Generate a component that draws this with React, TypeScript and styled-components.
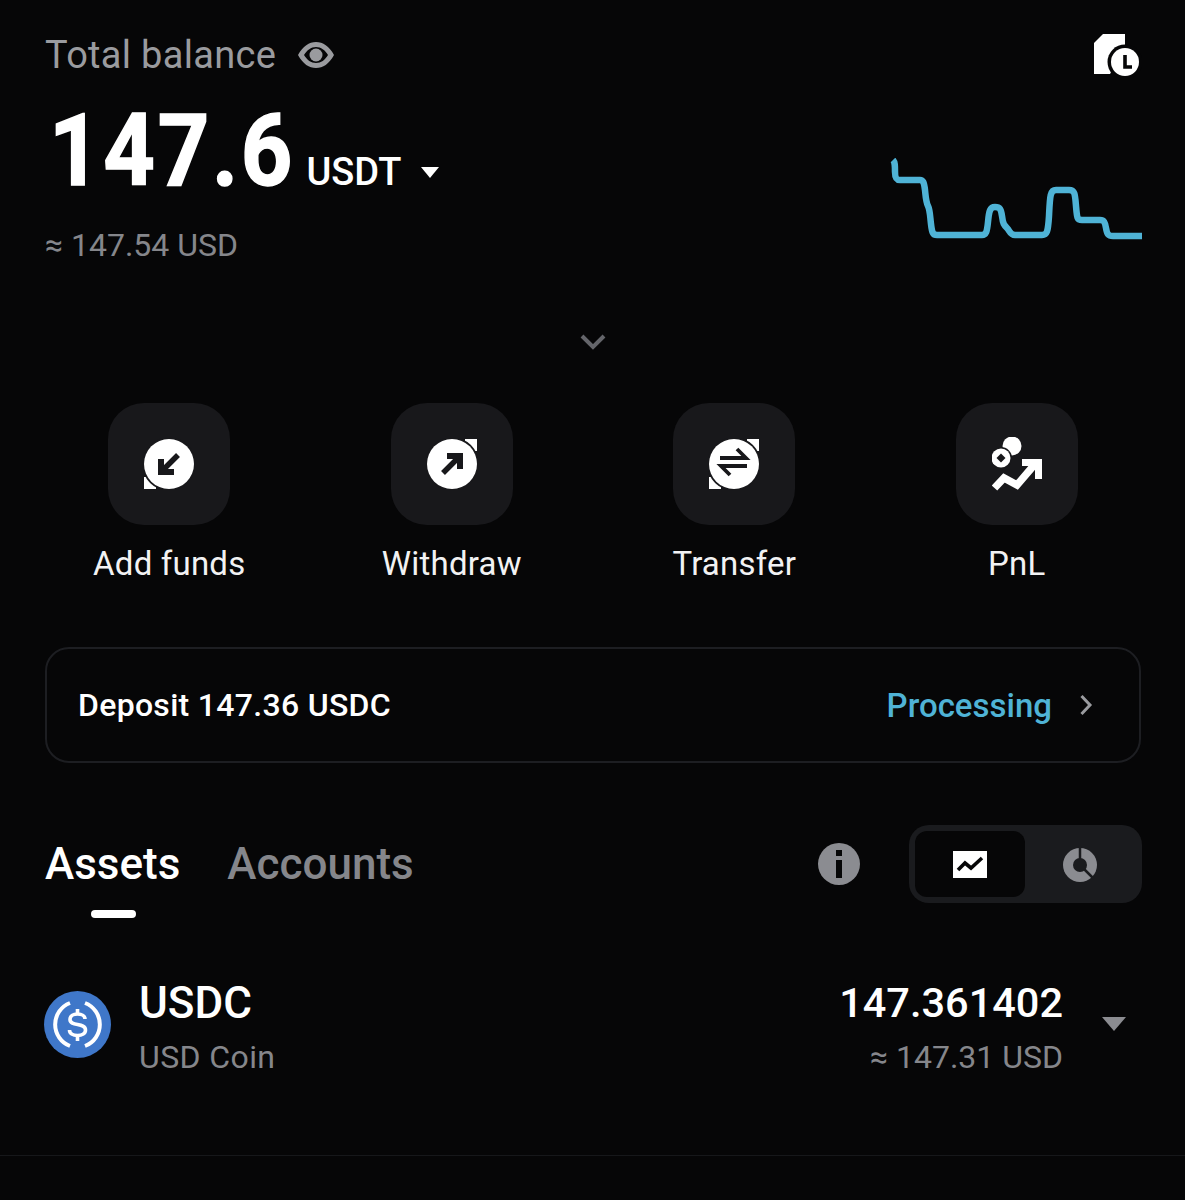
import React from "react";
import styled, { createGlobalStyle } from "styled-components";

const GlobalStyle = createGlobalStyle`
  html, body {
    margin: 0;
    padding: 0;
    background: #060607;
  }
  * {
    box-sizing: border-box;
  }
`;

const EyeIcon = () => (
  <svg width="36" height="26" viewBox="0 0 36 26">
    <path
      fillRule="evenodd"
      fill="#9a9b9f"
      d="M0 13C5 4 11 0 18 0s13 4 18 13c-5 9-11 13-18 13S5 22 0 13zM6 13c3 5 7 8 12 8s9-3 12-8c-3-5-7-8-12-8S9 8 6 13z"
    />
    <circle cx="18" cy="13" r="6.5" fill="#9a9b9f" />
  </svg>
);

const HistoryIcon = () => (
  <svg width="48" height="44" viewBox="0 0 48 44">
    <path d="M0 9L9 0H31V14L16 40H0Z" fill="#fff" />
    <circle cx="31" cy="28" r="17.500" fill="#060607" />
    <circle cx="31" cy="28" r="14" fill="#fff" />
    <path d="M31 21V33H38" fill="none" stroke="#060607" strokeWidth="3.6" />
  </svg>
);

const Sparkline = () => (
  <svg width="252" height="84" viewBox="0 0 252 84">
    <path
      fill="none"
      stroke="#4fb3d6"
      strokeWidth="6.500"
      strokeLinejoin="round"
      d="M3 2C5 4 5 8 5 14C5 20 6 22 10 22H30C33 22 34 24 35 32C36 42 36 44 38 48C40 52 40 58 41 66C42 75 43 77 47 77H92C96 77 97 74 98 64C99 53 100 49 105 49C110 49 111 51 112 58C113 66 114 67 117 70C120 73 120 77 125 77H152C157 77 158 74 159 58C160 38 160 32 166 32H179C185 32 185 36 186 48C187 60 187 62 192 62H210C214 62 215 64 216 70C217 76 218 78 223 78H252"
    />
  </svg>
);

const ChevronDown = () => (
  <svg width="28" height="18" viewBox="0 0 28 18">
    <path d="M3 3L14 14L25 3" fill="none" stroke="#64656a" strokeWidth="4" />
  </svg>
);

const ChevronRight = () => (
  <svg width="14" height="24" viewBox="0 0 14 24">
    <path d="M2.5 3L11 12L2.5 21" fill="none" stroke="#9a9b9f" strokeWidth="3" />
  </svg>
);

// white disc with a dark halo, so the corner squares underneath read as small wedges
const Disc = () => (
  <>
    <circle cx="26" cy="26" r="26.800" fill="#18181b" />
    <circle cx="26" cy="26" r="25" fill="#fff" />
  </>
);

const AddIcon = () => (
  <svg width="52" height="52" viewBox="0 0 52 52">
    <path d="M1 39H13V51H1Z" fill="#fff" />
    <Disc />
    <path d="M35 17L21 31" stroke="#18181b" strokeWidth="5.500" fill="none" />
    <path d="M15 21V37H31V31H21V21Z" fill="#18181b" />
  </svg>
);

const WithdrawIcon = () => (
  <svg width="52" height="52" viewBox="0 0 52 52">
    <path d="M39 1H51V13H39Z" fill="#fff" />
    <Disc />
    <path d="M17 35L31 21" stroke="#18181b" strokeWidth="5.500" fill="none" />
    <path d="M37 31V15H21V21H31V31Z" fill="#18181b" />
  </svg>
);

const TransferIcon = () => (
  <svg width="52" height="52" viewBox="0 0 52 52">
    <path d="M39 1H51V13H39Z" fill="#fff" />
    <path d="M1 39H13V51H1Z" fill="#fff" />
    <Disc />
    <path d="M12 20H38L29 11" stroke="#18181b" strokeWidth="3.800" fill="none" />
    <path d="M39 28H13L22 37" stroke="#18181b" strokeWidth="3.800" fill="none" />
  </svg>
);

const PnlIcon = () => (
  <svg width="50" height="54" viewBox="0 0 50 54">
    <circle cx="20" cy="9" r="9.500" fill="#fff" />
    <circle cx="9" cy="21" r="11" fill="#18181b" />
    <circle cx="9" cy="21" r="9.500" fill="#fff" />
    <path d="M9 16.500L13.500 21L9 25.500L4.500 21Z" fill="#18181b" />
    <path d="M2.500 51L12 41L25 48L43 27" fill="none" stroke="#fff" strokeWidth="7.500" />
    <path d="M30 22H50V42H43V29H30Z" fill="#fff" />
  </svg>
);

const InfoIcon = () => (
  <svg width="42" height="42" viewBox="0 0 42 42">
    <circle cx="21" cy="21" r="21" fill="#8b8c91" />
    <rect x="18" y="7" width="6" height="6" fill="#060607" />
    <rect x="18" y="17" width="6" height="18" fill="#060607" />
  </svg>
);

const ChartIcon = () => (
  <svg width="34" height="27" viewBox="0 0 34 27">
    <rect width="34" height="27" fill="#fff" />
    <path d="M5 19L12 12L18 17L29 7" fill="none" stroke="#060607" strokeWidth="3.6" />
  </svg>
);

const PieIcon = () => (
  <svg width="34" height="36" viewBox="0 0 34 36">
    <circle cx="17" cy="19" r="17" fill="#8b8c91" />
    <circle cx="17" cy="19" r="7" fill="#1a1b1e" />
    <path d="M17 0V13M21 23L31 33" stroke="#1a1b1e" strokeWidth="2.500" fill="none" />
  </svg>
);

const CoinLogo = () => (
  <svg width="67" height="67" viewBox="0 0 67 67">
    <circle cx="33.500" cy="33.500" r="33.500" fill="#3f77c9" />
    <path d="M26 12A23 23 0 0 0 26 55" fill="none" stroke="#fff" strokeWidth="4" />
    <path d="M41 12A23 23 0 0 1 41 55" fill="none" stroke="#fff" strokeWidth="4" />
    <path
      d="M41 28C41 25 38 23 33.500 23C29 23 26 25 26 28.500C26 36 41.500 31 41.500 39C41.500 42.500 38 44.500 33.500 44.500C29 44.500 25.500 42.500 25.500 39"
      fill="none"
      stroke="#fff"
      strokeWidth="3.600"
    />
    <path d="M33.500 18V24M33.500 44V50" stroke="#fff" strokeWidth="3.600" />
  </svg>
);

const actions = [
  { label: "Add funds", icon: <AddIcon /> },
  { label: "Withdraw", icon: <WithdrawIcon /> },
  { label: "Transfer", icon: <TransferIcon /> },
  { label: "PnL", icon: <PnlIcon /> },
];

export default function App() {
  return (
    <Page>
      <GlobalStyle />
      <Header>
        <BalanceColumn>
          <BalanceLabel>
            Total balance
            <EyeIcon />
          </BalanceLabel>
          <AmountRow>
            <Amount>147.6</Amount>
            <Currency>
              USDT
              <CurrencyCaret $size={9} $color="#fff" />
            </Currency>
          </AmountRow>
          <Approx>≈ 147.54 USD</Approx>
        </BalanceColumn>
        <ChartColumn>
          <HistoryIcon />
          <Sparkline />
        </ChartColumn>
      </Header>

      <ExpandRow>
        <ChevronDown />
      </ExpandRow>

      <Actions>
        {actions.map((action) => (
          <Action key={action.label}>
            <Tile>{action.icon}</Tile>
            <ActionLabel>{action.label}</ActionLabel>
          </Action>
        ))}
      </Actions>

      <DepositCard>
        <DepositText>Deposit 147.36 USDC</DepositText>
        <DepositStatus>
          <Processing>Processing</Processing>
          <ChevronRight />
        </DepositStatus>
      </DepositCard>

      <TabsRow>
        <Tabs>
          <Tab $active>
            Assets
            <TabMarker />
          </Tab>
          <Tab>Accounts</Tab>
        </Tabs>
        <TabTools>
          <InfoIcon />
          <Toggle>
            <ToggleItem $active>
              <ChartIcon />
            </ToggleItem>
            <ToggleItem>
              <PieIcon />
            </ToggleItem>
          </Toggle>
        </TabTools>
      </TabsRow>

      <AssetRow>
        <LogoSlot>
          <CoinLogo />
        </LogoSlot>
        <AssetName>
          <AssetSymbol>USDC</AssetSymbol>
          <AssetCoin>USD Coin</AssetCoin>
        </AssetName>
        <AssetValues>
          <AssetAmount>147.361402</AssetAmount>
          <AssetSub>≈ 147.31 USD</AssetSub>
        </AssetValues>
        <AssetCaret>
          <Caret $size={12} $color="#8b8c91" />
        </AssetCaret>
      </AssetRow>
    </Page>
  );
}

const Page = styled.div`
  width: 1185px;
  height: 1200px;
  overflow: hidden;
  background: #060607;
  color: #fff;
  font-family: Roboto, "Liberation Sans", sans-serif;
`;

const Header = styled.header`
  display: flex;
  justify-content: space-between;
  padding: 30px 43px 0 45px;
`;

const BalanceColumn = styled.div`
  display: flex;
  flex-direction: column;
`;

const BalanceLabel = styled.div`
  display: flex;
  align-items: center;
  gap: 22px;
  height: 50px;
  font-size: 38px;
  letter-spacing: 0.3px;
  color: #9a9b9f;
`;

const AmountRow = styled.div`
  display: flex;
  align-items: baseline;
  height: 90px;
  margin: 26px 0 0 4px;
`;

/* the reference digits are a narrow DIN cut, Roboto is squeezed to match */
const Amount = styled.span`
  display: inline-block;
  margin-right: -27px;
  font-size: 100px;
  line-height: 90px;
  font-weight: 700;
  letter-spacing: 3px;
  -webkit-text-stroke: 1.500px #fff;
  transform: scaleX(0.9);
  transform-origin: left center;
`;

const Currency = styled.span`
  margin-left: 11px;
  font-size: 38px;
  font-weight: 500;
`;

const Caret = styled.span<{ $size: number; $color: string }>`
  display: inline-block;
  width: 0;
  height: 0;
  border-left: ${({ $size }) => $size}px solid transparent;
  border-right: ${({ $size }) => $size}px solid transparent;
  border-top: ${({ $size }) => $size + 2}px solid ${({ $color }) => $color};
`;

const CurrencyCaret = styled(Caret)`
  margin: 0 0 7px 20px;
`;

const Approx = styled.div`
  margin-top: 30px;
  font-size: 32px;
  line-height: 38px;
  color: #85868b;
`;

const ChartColumn = styled.div`
  display: flex;
  flex-direction: column;
  align-items: flex-end;
  gap: 80px;
  padding-top: 4px;
`;

const ExpandRow = styled.div`
  display: flex;
  justify-content: center;
  margin-top: 69px;
`;

const Actions = styled.section`
  display: grid;
  grid-template-columns: repeat(4, 1fr);
  padding: 0 27px 0 28px;
  margin-top: 52px;
`;

const Action = styled.div`
  display: flex;
  flex-direction: column;
  align-items: center;
`;

const Tile = styled.div`
  display: flex;
  align-items: center;
  justify-content: center;
  width: 122px;
  height: 122px;
  border-radius: 36px;
  background: #18181b;
`;

const ActionLabel = styled.div`
  margin-top: 19px;
  font-size: 33px;
  line-height: 40px;
  letter-spacing: 0.2px;
  color: #f2f2f3;
`;

const DepositCard = styled.section`
  display: flex;
  align-items: center;
  justify-content: space-between;
  height: 116px;
  margin: 63px 44px 0 45px;
  padding: 0 46px 0 31px;
  border: 2px solid #1d1e22;
  border-radius: 24px;
`;

const DepositText = styled.div`
  font-size: 32px;
  font-weight: 500;
  letter-spacing: 0.3px;
`;

const DepositStatus = styled.div`
  display: flex;
  align-items: center;
  gap: 27px;
`;

const Processing = styled.div`
  font-size: 33px;
  font-weight: 500;
  color: #4fb3d6;
`;

const TabsRow = styled.section`
  display: flex;
  align-items: center;
  justify-content: space-between;
  margin-top: 62px;
  padding: 0 43px 0 45px;
`;

const Tabs = styled.div`
  display: flex;
  gap: 47px;
`;

const Tab = styled.div<{ $active?: boolean }>`
  position: relative;
  font-size: 44px;
  font-weight: 500;
  line-height: 50px;
  color: ${({ $active }) => ($active ? "#fff" : "#85868b")};
`;

const TabMarker = styled.span`
  position: absolute;
  left: 50%;
  bottom: -29px;
  width: 45px;
  height: 8px;
  margin-left: -22px;
  border-radius: 4px;
  background: #fff;
`;

const TabTools = styled.div`
  display: flex;
  align-items: center;
  gap: 49px;
`;

const Toggle = styled.div`
  display: flex;
  width: 233px;
  height: 78px;
  padding: 6px;
  border-radius: 20px;
  background: #1a1b1e;
`;

const ToggleItem = styled.div<{ $active?: boolean }>`
  display: flex;
  align-items: center;
  justify-content: center;
  width: 110px;
  border-radius: 12px;
  background: ${({ $active }) => ($active ? "#060607" : "transparent")};
`;

const AssetRow = styled.section`
  display: flex;
  align-items: center;
  margin-top: 47px;
  padding: 25px 44px 78px 44px;
  border-bottom: 1px solid #16171a;
`;

const LogoSlot = styled.div`
  display: flex;
  padding-bottom: 4px;
`;

const AssetName = styled.div`
  display: flex;
  flex-direction: column;
  gap: 6px;
  margin-left: 28px;
`;

const AssetSymbol = styled.div`
  font-size: 44px;
  line-height: 56px;
  font-weight: 500;
`;

const AssetSub = styled.div`
  font-size: 32px;
  line-height: 40px;
  color: #85868b;
`;

const AssetCoin = styled(AssetSub)`
  letter-spacing: 0.4px;
`;

const AssetValues = styled.div`
  display: flex;
  flex-direction: column;
  gap: 6px;
  align-items: flex-end;
  margin-left: auto;
`;

const AssetAmount = styled.div`
  font-size: 41.500px;
  line-height: 56px;
  font-weight: 500;
`;

const AssetCaret = styled.div`
  display: flex;
  width: 78px;
  justify-content: flex-end;
  padding: 0 15px 4px 0;
`;
